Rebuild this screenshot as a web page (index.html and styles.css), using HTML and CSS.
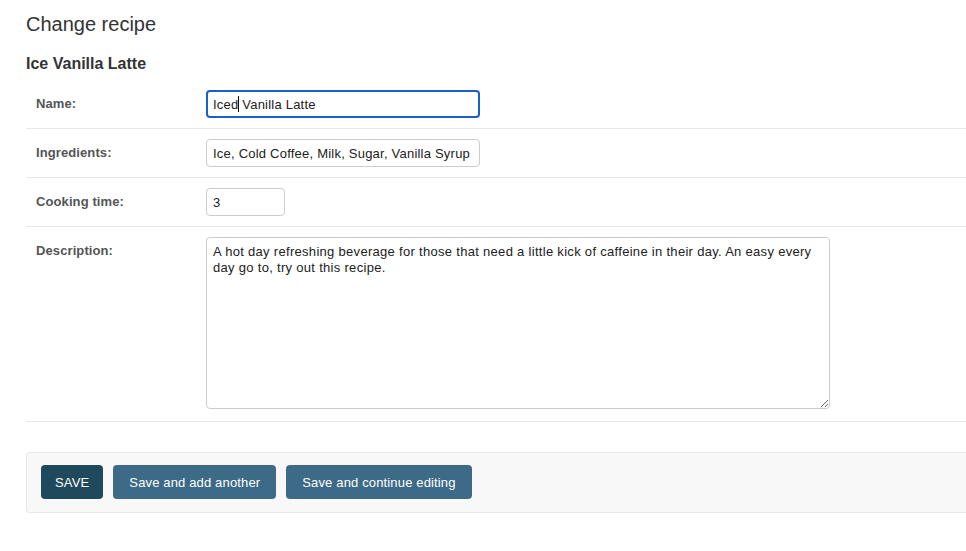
FILE: index.html
```html
<!DOCTYPE html>
<html>
<head>
<meta charset="utf-8">
<link rel="stylesheet" href="styles.css">
</head>
<body>
<div class="content">
  <h1 class="title">Change recipe</h1>
  <h2 class="subtitle">Ice Vanilla Latte</h2>
  <form class="form">
    <div class="row">
      <label class="label">Name:</label>
      <div class="field-wrap">
        <input class="input input-wide input-focus" type="text" value="Iced Vanilla Latte">
        <span class="caret"></span>
      </div>
    </div>
    <div class="row">
      <label class="label">Ingredients:</label>
      <input class="input input-wide" type="text" value="Ice, Cold Coffee, Milk, Sugar, Vanilla Syrup">
    </div>
    <div class="row">
      <label class="label">Cooking time:</label>
      <input class="input input-short" type="text" value="3">
    </div>
    <div class="row row-tall">
      <label class="label">Description:</label>
      <textarea class="textarea">A hot day refreshing beverage for those that need a little kick of caffeine in their day. An easy every
day go to, try out this recipe.</textarea>
    </div>
    <div class="submit-row">
      <button type="button" class="btn btn-default">SAVE</button>
      <button type="button" class="btn">Save and add another</button>
      <button type="button" class="btn">Save and continue editing</button>
    </div>
  </form>
</div>
</body>
</html>
```
FILE: styles.css
```css
html, body {
  margin: 0;
  padding: 0;
  background: #fff;
}
body {
  font-family: "Liberation Sans", Arial, sans-serif;
  color: #333;
  font-size: 13px;
}
.content {
  padding: 11px 0 0 26px;
}
.title {
  margin: 0;
  font-size: 20px;
  font-weight: 300;
  line-height: 26px;
  color: #333;
}
.subtitle {
  margin: 17px 0 0 0;
  font-size: 16px;
  font-weight: 700;
  line-height: 20px;
  color: #333;
}
.form {
  margin-top: 6px;
}
.row {
  display: flex;
  align-items: flex-start;
  padding: 10px 10px;
  border-bottom: 1px solid #e8e8e8;
  height: 28px;
}
.row-tall {
  height: 174px;
}
.label {
  width: 160px;
  padding: 6px 10px 0 0;
  font-weight: 700;
  color: #555;
  font-size: 13px;
  line-height: 16px;
  letter-spacing: 0.1px;
}
.field-wrap {
  position: relative;
}
.input {
  box-sizing: border-box;
  height: 28px;
  border: 1px solid #ccc;
  border-radius: 4px;
  padding: 5px 6px;
  font-family: "Liberation Sans", Arial, sans-serif;
  font-size: 13px;
  letter-spacing: 0.22px;
  color: #222;
  background: #fff;
  margin: 0;
  outline: none;
}
.input-wide {
  width: 274px;
}
.input-short {
  width: 79px;
}
.input-focus {
  border: 2px solid #1a5fc8;
  padding: 4px 5px;
}
.caret {
  position: absolute;
  left: 32px;
  top: 6px;
  width: 1px;
  height: 16px;
  background: #111;
}
.textarea {
  box-sizing: border-box;
  width: 624px;
  height: 172px;
  border: 1px solid #ccc;
  border-radius: 4px;
  padding: 6px 6px;
  font-family: "Liberation Sans", Arial, sans-serif;
  font-size: 13px;
  line-height: 16px;
  letter-spacing: 0.3px;
  color: #222;
  margin: 0;
  resize: both;
  white-space: pre-wrap;
}
.submit-row {
  display: flex;
  gap: 10px;
  margin-top: 30px;
  padding: 12px 14px 13px;
  background: #f8f8f8;
  border: 1px solid #e8e8e8;
  border-right: none;
  border-radius: 4px 0 0 4px;
  height: 34px;
}
.btn {
  height: 34px;
  border: none;
  border-radius: 4px;
  padding: 0 16px;
  background: #3d6a86;
  color: #fff;
  font-family: "Liberation Sans", Arial, sans-serif;
  font-size: 13px;
  letter-spacing: 0.15px;
  cursor: pointer;
}
.btn-default {
  background: #1f4a5e;
  padding: 0 14px;
}
```
